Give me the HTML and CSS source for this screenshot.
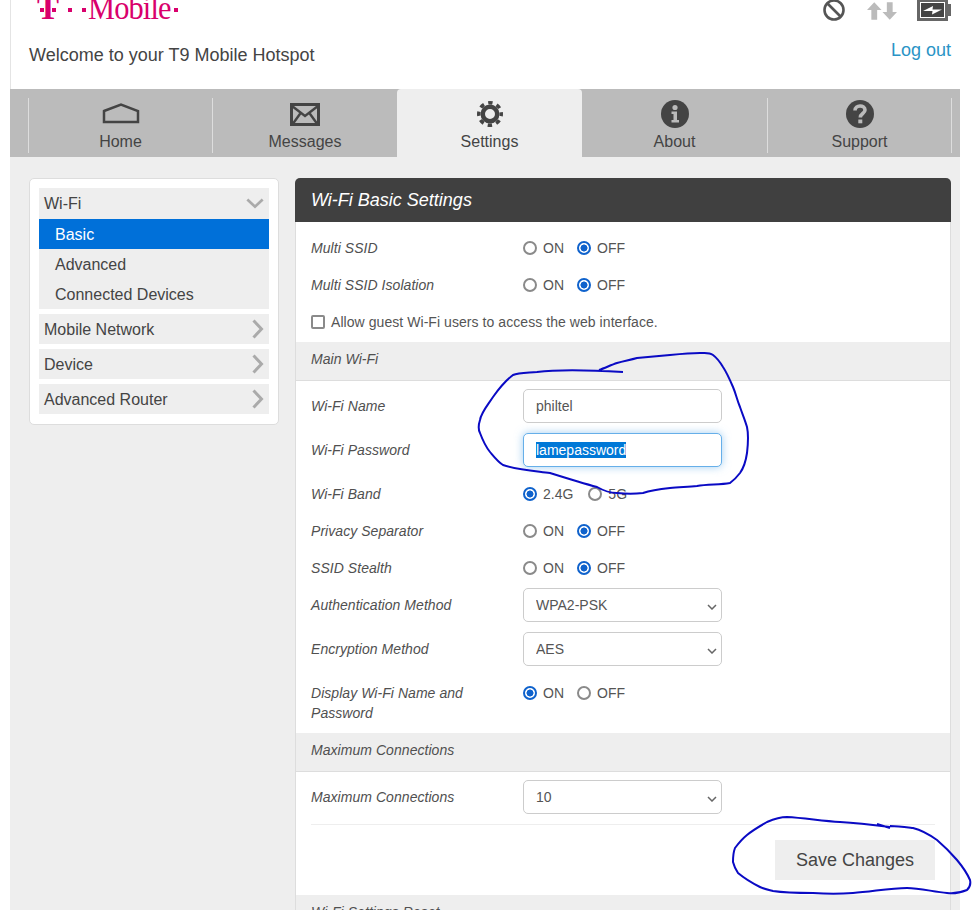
FILE: index.html
```html
<!DOCTYPE html>
<html lang="en">
<head>
    <meta charset="UTF-8">
    <title>T9 Mobile Hotspot</title>
    <link rel="stylesheet" href="styles.css">
</head>
<body>
    <div class="shell">
        <header class="header">
            <div class="head-top">
                <div class="logo">
                    <span class="dot dot-a"></span><span class="logo-t">T</span><span class="dot dot-b"></span>
                    <span class="dot dot-c"></span><span class="dot dot-d"></span>
                    <span class="logo-word">Mobile</span><span class="dot dot-e"></span>
                </div>
                <div class="status">
                    <svg class="icon-ban" width="24" height="24" viewBox="0 0 24 24"><circle cx="12" cy="12" r="9.500" fill="none" stroke="#555" stroke-width="2.600"/><path d="M5.500 5.500 18.500 18.500" stroke="#555" stroke-width="2.600"/></svg>
                    <svg class="icon-arrows" width="30" height="18" viewBox="0 0 31 18"><path d="M7.500 0 15 8H10.500V18H4.500V8H0Z M23.500 18 31 10H26.500V0H20.500V10H16Z" fill="#bbb"/></svg>
                    <svg class="icon-battery" width="34" height="22" viewBox="0 0 34 22"><rect x="1.500" y="1.500" width="28" height="19" fill="none" stroke="#666" stroke-width="3"/><rect x="4" y="4" width="23" height="14" fill="#444"/><path d="M6 12 16 7 15.500 10.500 25 10.500 15 15.500 15.500 12Z" fill="#fff"/><rect x="31" y="5" width="3" height="12" fill="#666"/></svg>
                </div>
            </div>
            <div class="head-bottom">
                <div class="welcome">Welcome to your T9 Mobile Hotspot</div>
                <a class="logout">Log out</a>
            </div>
        </header>

        <nav class="tabs">
            <a class="tab">
                <span class="tab-inner">
                    <svg class="tab-icon" width="38" height="22" viewBox="0 0 38 22"><path d="M2 8 19 1.500 36 8V19H2Z" fill="none" stroke="#444" stroke-width="2.500"/></svg>
                    Home
                </span>
            </a>
            <a class="tab">
                <span class="tab-inner">
                    <svg class="tab-icon" width="30" height="24" viewBox="0 0 30 24"><rect x="1.500" y="2.500" width="27" height="20" fill="none" stroke="#444" stroke-width="3"/><path d="M2 4 15 14 28 4M2 23 11 10.500M28 23 19 10.500" fill="none" stroke="#444" stroke-width="2.400"/></svg>
                    Messages
                </span>
            </a>
            <a class="tab active">
                <span class="tab-inner">
                    <svg class="tab-icon" width="28" height="28" viewBox="0 0 28 28"><circle cx="14" cy="14" r="7.250" fill="none" stroke="#444" stroke-width="4.500"/><circle cx="14" cy="14" r="11.250" fill="none" stroke="#444" stroke-width="3.500" stroke-dasharray="4.420 4.420" stroke-dashoffset="2.210"/></svg>
                    Settings
                </span>
            </a>
            <a class="tab">
                <span class="tab-inner">
                    <svg class="tab-icon" width="28" height="28" viewBox="0 0 28 28"><circle cx="14" cy="14" r="14" fill="#444"/><circle cx="14" cy="7.500" r="2.600" fill="#bbb"/><path d="M10.500 11.500H16V20H18V22.500H10.500V20H12.500V14H10.500Z" fill="#bbb"/></svg>
                    About
                </span>
            </a>
            <a class="tab">
                <span class="tab-inner">
                    <svg class="tab-icon" width="28" height="28" viewBox="0 0 28 28"><circle cx="14" cy="14" r="14" fill="#444"/><path d="M9 10.500C9 4.500 19 4.500 19 10C19 13.500 14.300 13.500 14.300 17.500" fill="none" stroke="#bbb" stroke-width="3.600"/><rect x="12.300" y="19.500" width="4" height="3.800" fill="#bbb"/></svg>
                    Support
                </span>
            </a>
        </nav>

        <main class="content">
            <aside class="sidebar">
                <div class="menu-group">
                    <div class="menu-head menu-head-open">Wi-Fi
                        <svg class="chev-down" width="18" height="11" viewBox="0 0 20 12"><path d="M1.500 1.500 10 9.500 18.500 1.500" fill="none" stroke="#aaa" stroke-width="3"/></svg>
                    </div>
                    <a class="menu-item selected">Basic</a>
                    <a class="menu-item">Advanced</a>
                    <a class="menu-item">Connected Devices</a>
                </div>
                <div class="menu-group">
                    <div class="menu-head">Mobile Network
                        <svg class="chev-right" width="12" height="20" viewBox="0 0 12 20"><path d="M1.500 1.500 9.500 10 1.500 18.500" fill="none" stroke="#aaa" stroke-width="3"/></svg>
                    </div>
                </div>
                <div class="menu-group">
                    <div class="menu-head">Device
                        <svg class="chev-right" width="12" height="20" viewBox="0 0 12 20"><path d="M1.500 1.500 9.500 10 1.500 18.500" fill="none" stroke="#aaa" stroke-width="3"/></svg>
                    </div>
                </div>
                <div class="menu-group">
                    <div class="menu-head">Advanced Router
                        <svg class="chev-right" width="12" height="20" viewBox="0 0 12 20"><path d="M1.500 1.500 9.500 10 1.500 18.500" fill="none" stroke="#aaa" stroke-width="3"/></svg>
                    </div>
                </div>
            </aside>

            <section class="panel">
                <h2 class="panel-title">Wi-Fi Basic Settings</h2>

                <div class="group group-top">
                    <div class="row radio-row">
                        <span class="row-label">Multi SSID</span>
                        <div class="radios">
                            <label class="radio"><input type="radio" name="multi"> ON</label>
                            <label class="radio"><input type="radio" name="multi" checked> OFF</label>
                        </div>
                    </div>
                    <div class="row radio-row">
                        <span class="row-label">Multi SSID Isolation</span>
                        <div class="radios">
                            <label class="radio"><input type="radio" name="iso"> ON</label>
                            <label class="radio"><input type="radio" name="iso" checked> OFF</label>
                        </div>
                    </div>
                    <label class="guest"><input type="checkbox"> Allow guest Wi-Fi users to access the web interface.</label>
                </div>

                <div class="section-head">Main Wi-Fi</div>

                <div class="group group-inputs">
                    <div class="row field-row">
                        <span class="row-label">Wi-Fi Name</span>
                        <input class="field" type="text" value="philtel">
                    </div>
                    <div class="row field-row">
                        <span class="row-label">Wi-Fi Password</span>
                        <div class="field field-focus"><span class="selected-text">lamepassword</span></div>
                    </div>
                </div>

                <div class="group">
                    <div class="row radio-row">
                        <span class="row-label">Wi-Fi Band</span>
                        <div class="radios radios-band">
                            <label class="radio"><input type="radio" name="band" checked> 2.4G</label>
                            <label class="radio"><input type="radio" name="band"> 5G</label>
                        </div>
                    </div>
                    <div class="row radio-row">
                        <span class="row-label">Privacy Separator</span>
                        <div class="radios">
                            <label class="radio"><input type="radio" name="privacy"> ON</label>
                            <label class="radio"><input type="radio" name="privacy" checked> OFF</label>
                        </div>
                    </div>
                    <div class="row radio-row">
                        <span class="row-label">SSID Stealth</span>
                        <div class="radios">
                            <label class="radio"><input type="radio" name="stealth"> ON</label>
                            <label class="radio"><input type="radio" name="stealth" checked> OFF</label>
                        </div>
                    </div>
                </div>

                <div class="group group-selects">
                    <div class="row field-row">
                        <span class="row-label">Authentication Method</span>
                        <select class="field"><option>WPA2-PSK</option></select>
                    </div>
                    <div class="row field-row">
                        <span class="row-label">Encryption Method</span>
                        <select class="field"><option>AES</option></select>
                    </div>
                </div>

                <div class="group group-display">
                    <div class="row row-tall">
                        <span class="row-label">Display Wi-Fi Name and Password</span>
                        <div class="radios">
                            <label class="radio"><input type="radio" name="display" checked> ON</label>
                            <label class="radio"><input type="radio" name="display"> OFF</label>
                        </div>
                    </div>
                </div>

                <div class="section-head">Maximum Connections</div>

                <div class="group group-max">
                    <div class="row field-row">
                        <span class="row-label">Maximum Connections</span>
                        <select class="field"><option>10</option></select>
                    </div>
                </div>

                <hr class="rule">
                <div class="actions"><button class="save">Save Changes</button></div>

                <div class="section-head">Wi-Fi Settings Reset</div>
            </section>
        </main>
    </div>

    <!-- pen marks drawn over the screenshot -->
    <svg class="scribble" width="972" height="910" viewBox="0 0 972 910">
        <path d="M623 372C590 370 560 369 537 372C525 373 518 373 513 375C505 381 498 390 493 397C487 406 481 413 480 420C478 426 478 429 480 433C483 441 486 447 490 452C495 458 498 462 503 465C518 470 535 471 550 473C566 478 582 483 597 487C604 491 610 493 617 493C626 494 635 494 643 493C652 490 661 489 670 488C679 487 688 487 697 486C708 484 720 485 730 483C734 480 737 477 740 473C745 466 746 460 747 453C748 444 749 436 747 427C745 420 742 413 740 407C737 400 736 394 733 387C730 380 727 373 723 367C720 362 717 358 713 355C709 352 705 353 700 353C690 353 680 354 670 355C659 356 648 357 637 358C630 360 624 361 617 363C611 365 605 368 599 370" fill="none" stroke="#0a0ac4" stroke-width="2"/>
        <path d="M890 828 877 824M890 827C874 825 857 823 840 822C822 821 805 818 787 817C780 817 774 819 767 822C760 826 753 830 747 835C742 839 738 844 735 848C733 853 733 857 733 862C734 866 736 870 738 873C744 878 752 883 760 887C764 889 769 890 773 891C786 893 800 893 813 893C827 894 840 894 853 893C871 892 889 888 907 888C920 888 934 892 947 893C954 894 962 892 967 890C970 887 971 884 970 880C967 873 962 866 957 860C951 853 944 846 937 840C930 835 921 830 913 828C905 827 898 826 890 826" fill="none" stroke="#0a0ac4" stroke-width="2"/>
    </svg>
</body>
</html>
```

FILE: styles.css
```css
* {
    box-sizing: border-box;
}
html, body {
    height: 910px;
    overflow: hidden;
}
body {
    margin: 0;
    background: white;
    color: #444;
    font-family: "Liberation Sans", Arial, sans-serif;
}
.shell {
    position: relative;
    width: 950px;
    margin-left: 10px;
}

/* header */
.header {
    height: 89px;
    padding-left: 18px;
    padding-right: 9px;
    border-left: 1px solid #e4e4e4;
    overflow: hidden;
}
.head-top {
    display: flex;
    justify-content: space-between;
    height: 40px;
}
.logo {
    position: relative;
    width: 160px;
    color: #d9006c;
    font-family: "Liberation Serif", serif;
}
.logo-word {
    position: absolute;
    left: 59px;
    top: -10px;
    font-size: 33px;
    line-height: 36px;
    letter-spacing: -0.9px;
    transform: scaleX(0.92);
    transform-origin: left;
}
.logo-t {
    position: absolute;
    left: 8px;
    top: -10px;
    font-size: 33px;
    font-weight: bold;
    line-height: 36px;
}
.dot {
    position: absolute;
    top: 8px;
    width: 4px;
    height: 4px;
    background: #d9006c;
}
.dot-a { left: 11px; }
.dot-b { left: 23px; }
.dot-c { left: 39px; }
.dot-d { left: 53px; }
.dot-e { left: 145px; }
.status {
    display: flex;
    align-items: flex-start;
    margin-top: -2px;
}
.icon-arrows {
    margin-left: 21px;
    margin-top: 4px;
}
.icon-battery {
    margin-left: 20px;
    margin-top: 1px;
}
.head-bottom {
    display: flex;
    justify-content: space-between;
    align-items: flex-start;
    font-size: 18px;
    line-height: 20px;
}
.welcome {
    margin-top: 5px;
}
.logout {
    color: #2a94c6;
}

/* main tabs */
.tabs {
    display: grid;
    grid-template-columns: 184px repeat(4, 185px);
    height: 68px;
    padding-left: 18px;
    background: #bbb;
}
.tab {
    padding-top: 9px;
    font-size: 16px;
    border-radius: 4px 4px 0 0;
}
.tab-inner {
    display: flex;
    flex-direction: column;
    align-items: center;
    height: 55px;
    padding-top: 2px;
    border-left: 1px solid #ddd;
}
.tab-icon {
    height: 28px;
    margin-bottom: 5px;
}
.tab:last-child .tab-inner {
    border-right: 1px solid #ddd;
}
.tab.active {
    background: #eee;
}
.tab.active .tab-inner,
.tab.active + .tab .tab-inner {
    border-left: none;
}

/* page body */
.content {
    display: flex;
    align-items: flex-start;
    gap: 16px;
    height: 753px;
    padding: 21px 9px 0 19px;
    background: #eee;
}
.sidebar {
    display: flex;
    flex-direction: column;
    gap: 5px;
    flex: none;
    width: 250px;
    padding: 9px 9px 10px;
    background: white;
    border: 1px solid #ddd;
    border-radius: 5px;
}
.menu-group {
    background: #eee;
    font-size: 16px;
}
.menu-head {
    display: flex;
    justify-content: space-between;
    align-items: center;
    height: 30px;
    padding: 2px 5px 0;
}
.menu-head svg {
    margin-top: -2px;
}
.menu-head-open {
    height: 31px;
    padding-top: 0;
}
.menu-head-open svg {
    margin-top: 0;
}
.menu-item {
    display: block;
    height: 30px;
    padding-left: 16px;
    line-height: 32px;
}
.menu-item.selected {
    background: #0070d9;
    color: white;
}

/* settings panel */
.panel {
    flex: none;
    width: 656px;
    height: 760px;
    background: white;
    border: 1px solid #ddd;
    border-top: none;
    border-radius: 5px 5px 0 0;
}
.panel-title {
    height: 44px;
    margin: 0 -1px;
    padding-left: 16px;
    background: #404040;
    border-radius: 5px 5px 0 0;
    color: white;
    font-size: 18px;
    font-style: italic;
    font-weight: normal;
    line-height: 44px;
}
.group-top {
    padding-top: 7px;
}
.group-inputs {
    padding: 8px 0;
}
.group-selects {
    padding-top: 2px;
}
.group-display {
    padding: 17px 0 10px;
}
.group-max {
    padding: 8px 0 10px;
}
.row {
    display: grid;
    grid-template-columns: 212px 1fr;
    align-items: center;
    padding: 0 15px;
    font-size: 14px;
}
.row-label {
    color: #505050;
    font-style: italic;
    letter-spacing: 0.05px;
}
.radio-row {
    height: 37px;
}
.row-tall {
    align-items: start;
    line-height: 20px;
}
.row-tall .radios {
    height: 20px;
}
.field-row + .field-row {
    margin-top: 10px;
}
.radios {
    display: flex;
    gap: 13px;
}
.radios-band {
    gap: 15px;
}
.radio {
    display: inline-flex;
    align-items: center;
    gap: 6px;
    color: #555;
}
.radio input {
    appearance: none;
    width: 14px;
    height: 14px;
    margin: 0;
    background: white;
    border: 2px solid #8a8a8a;
    border-radius: 50%;
}
.radio input:checked {
    background: radial-gradient(circle, #0f62cc 0 3.2px, white 3.8px);
    border-color: #0f62cc;
}
.guest {
    display: flex;
    align-items: center;
    gap: 6px;
    height: 39px;
    padding: 0 0 2px 15px;
    font-size: 14px;
    letter-spacing: 0.06px;
    color: #555;
}
.guest input {
    appearance: none;
    width: 14px;
    height: 14px;
    margin: 0;
    background: white;
    border: 2px solid #8a8a8a;
    border-radius: 2px;
}
.section-head {
    height: 39px;
    padding-left: 15px;
    background: #eee;
    border-bottom: 1px solid #ddd;
    color: #505050;
    font-size: 14px;
    font-style: italic;
    letter-spacing: 0.05px;
    line-height: 34px;
}
.field {
    display: block;
    width: 199px;
    height: 34px;
    padding: 0 12px;
    background: white;
    border: 1px solid #ccc;
    border-radius: 5px;
    color: #555;
    font-family: "Liberation Sans", Arial, sans-serif;
    font-size: 14px;
    line-height: 32px;
    outline: none;
}
select.field {
    appearance: none;
    background: white url("data:image/svg+xml,%3Csvg xmlns='http://www.w3.org/2000/svg' width='10' height='6'%3E%3Cpath d='M1 1 5 5 9 1' fill='none' stroke='%23666' stroke-width='1.500'/%3E%3C/svg%3E") no-repeat 183px 15px;
}
.field-focus {
    border-color: #66afe9;
    box-shadow: 0 0 8px rgba(102, 175, 233, 0.6);
}
.selected-text {
    background: #0078d7;
    color: white;
}
.rule {
    height: 1px;
    margin: 0 15px;
    background: #eee;
    border: none;
}
.actions {
    display: flex;
    justify-content: flex-end;
    padding: 15px;
}
.save {
    width: 160px;
    height: 40px;
    background: #eee;
    border: none;
    color: #444;
    font-family: "Liberation Sans", Arial, sans-serif;
    font-size: 18px;
}

/* pen marks, lying over the page */
.scribble {
    position: absolute;
    left: 0;
    top: 0;
    pointer-events: none;
}
```
